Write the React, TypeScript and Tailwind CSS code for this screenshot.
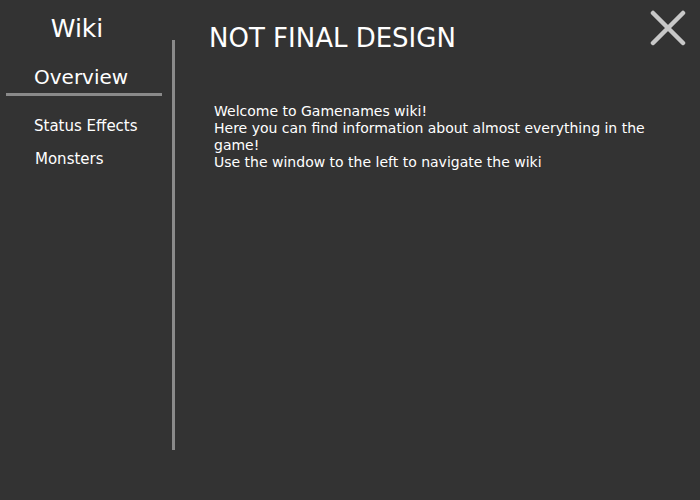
export default function App() {
  return (
    <div
      className="relative flex h-[500px] w-[700px] overflow-hidden bg-[#333333] text-white"
      style={{ fontFamily: '"DejaVu Sans", Verdana, sans-serif' }}
    >
      {/* sidebar */}
      <div className="flex w-[172px] shrink-0 flex-col">
        <div className="flex w-[154px] justify-center pt-[14px] text-[25px] leading-[30px]">Wiki</div>
        <div className="mt-[20px] pl-[34px] text-[20px] leading-[26px]">Overview</div>
        <div className="ml-[6px] mt-[3px] h-[3px] w-[156px] bg-[#8a8a8a]" />
        <div className="mt-[21px] flex flex-col gap-[15px] pl-[34px] text-[15px] leading-[18px]">
          <div>Status Effects</div>
          <div className="pl-px">Monsters</div>
        </div>
      </div>

      {/* divider */}
      <div className="mt-[40px] h-[410px] w-[3px] bg-[#8a8a8a]" />

      {/* content */}
      <div className="flex flex-1 flex-col pl-[34px] pr-[22px]">
        <h1 className="pt-[23px] text-[26px] leading-[30px]">NOT FINAL DESIGN</h1>
        <div className="mt-[50px] pl-[5px] text-[14px] leading-[17px]">
          <p>Welcome to Gamenames wiki!</p>
          <p>Here you can find information about almost everything in the game!</p>
          <p>Use the window to the left to navigate the wiki</p>
        </div>
      </div>

      {/* close */}
      <button className="absolute right-[14px] top-[10px] h-[36px] w-[36px]">
        <svg viewBox="0 0 36 36" className="h-full w-full">
          <path d="M3 3 L33 33 M33 3 L3 33" stroke="#c8c8c8" strokeWidth="4.5" strokeLinecap="round" />
        </svg>
      </button>
    </div>
  )
}
